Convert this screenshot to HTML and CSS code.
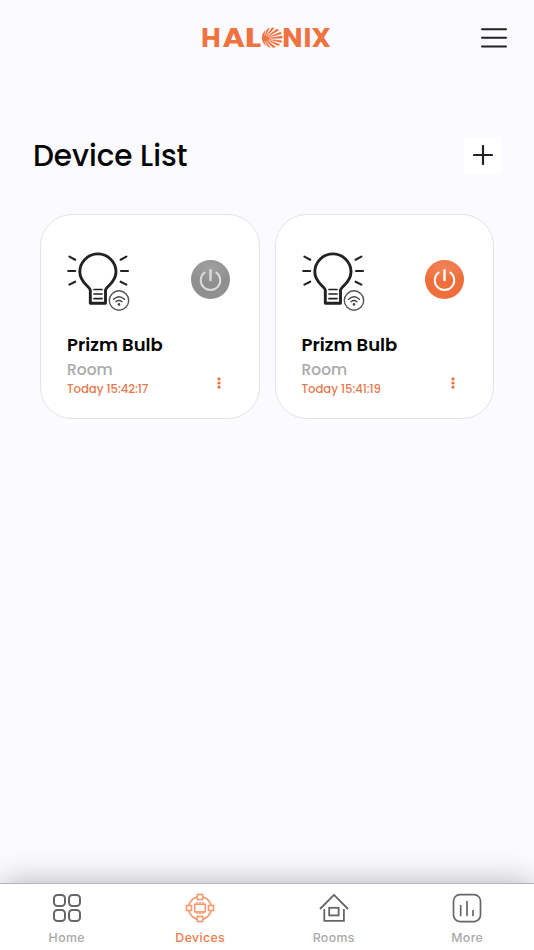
FILE: index.html
```html
<!DOCTYPE html>
<html lang="en">

<head>
    <meta charset="UTF-8">
    <meta name="viewport" content="width=device-width, initial-scale=1.0">
    <title>Halonix</title>
    <link rel="stylesheet" href="styles.css">
</head>

<body>
    <!-- icons used more than once -->
    <svg class="sprite" aria-hidden="true">
        <symbol id="bulb" viewBox="0 0 64 60">
            <g fill="none" stroke="#222" stroke-width="2.9">
                <path d="M23.3 51.2V38.5C23.3 34.5 12.8 31 12.8 20a18.1 18.1 0 0 1 36.2 0C49 31 38.5 34.5 38.5 38.5V51.2Z" stroke-linejoin="round" />
                <path d="M27 37.5h8M27 42h8M27 46.7h8" stroke-width="1.7" stroke-linecap="round" />
                <path d="M2.4 4.6l5.8 3.1M1.2 19h7M2.4 32.6l5.8-2.9M59.4 4.6l-5.8 3.1M61 19h-7M59.4 32.6l-5.8-2.9" stroke-width="2.1" stroke-linecap="round" />
            </g>
            <circle cx="52" cy="48.5" r="11" fill="#fff" />
            <circle cx="52" cy="48.5" r="9.7" fill="#fff" stroke="#555" stroke-width="1.4" />
            <path d="M46.6 47.2q5.4-4.8 10.8 0M49 49.8q3-2.6 6 0" fill="none" stroke="#444" stroke-width="1.3" stroke-linecap="round" />
            <circle cx="52" cy="52.4" r="1.3" fill="#444" />
        </symbol>
        <symbol id="power" viewBox="0 0 40 40">
            <path d="M14 12.8a10 10 0 1 0 12 0" fill="none" stroke="currentColor" stroke-width="2" stroke-linecap="round" />
            <path d="M20 10.5v10" stroke="currentColor" stroke-width="2.5" stroke-linecap="round" />
        </symbol>
        <symbol id="dots" viewBox="0 0 4 12">
            <circle cx="2" cy="1.9" r="1.6" />
            <circle cx="2" cy="6" r="1.6" />
            <circle cx="2" cy="10.1" r="1.6" />
        </symbol>
    </svg>

    <header class="header">
        <svg class="logo" viewBox="0 0 130 44" role="img" aria-label="Halonix">
            <text x="-1" y="31.2">H</text>
            <text x="20.4" y="31.2" textLength="22.4" lengthAdjust="spacingAndGlyphs">A</text>
            <text x="42.8" y="31.2" textLength="16.5" lengthAdjust="spacingAndGlyphs">L</text>
            <circle cx="70.2" cy="21.7" r="10.3" />
            <path class="rays" d="M64 20.2L68 11l2.4-.4ZM65 20.5L73.5 11l2 1ZM66 21L78 13.8l1.2 1.6ZM67 21.8L80.5 17.8l.3 1.8ZM67 22.9L81 22.6l-.2 1.8ZM66.5 23.8L79.8 27l-1 1.5ZM65.5 24.6L76.5 30.2l-1.8 1.3ZM64 25L71.5 32.5l-2.2.2ZM62.5 24.8L66 31.8l-1.6-.8ZM62.6 19.8L63.4 13.6l1.6-1.3Z" />
            <text x="80.3 101.6 109.6" y="31.2">NIX</text>
        </svg>
        <button class="menuBtn" aria-label="Menu">
            <svg width="28" height="22" viewBox="0 0 28 22">
                <path d="M2 2.3h24M2 10.8h24M2 19.4h24" stroke="#222" stroke-width="2" stroke-linecap="round" />
            </svg>
        </button>
    </header>

    <main class="main">
        <div class="titleRow">
            <h1 class="title">Device List</h1>
            <button class="addBtn" aria-label="Add device">
                <svg width="20" height="20" viewBox="0 0 20 20">
                    <path d="M10 1v18M1 10h18" stroke="#222" stroke-width="2.2" stroke-linecap="round" />
                </svg>
            </button>
        </div>

        <div class="deviceGrid">
            <div class="card">
                <div class="cardTop">
                    <svg class="bulb"><use href="#bulb" /></svg>
                    <button class="power" aria-label="Turn on"><svg><use href="#power" /></svg></button>
                </div>
                <h2 class="deviceName">Prizm Bulb</h2>
                <p class="room">Room</p>
                <p class="time">Today 15:42:17</p>
                <svg class="dots"><use href="#dots" /></svg>
            </div>
            <div class="card">
                <div class="cardTop">
                    <svg class="bulb"><use href="#bulb" /></svg>
                    <button class="power powerOn" aria-label="Turn off"><svg><use href="#power" /></svg></button>
                </div>
                <h2 class="deviceName">Prizm Bulb</h2>
                <p class="room">Room</p>
                <p class="time">Today 15:41:19</p>
                <svg class="dots"><use href="#dots" /></svg>
            </div>
        </div>
    </main>

    <nav class="navbar">
        <a class="navItem">
            <svg viewBox="0 0 30 30" stroke-width="2">
                <rect x="2" y="2" width="11" height="11" rx="3.5" />
                <rect x="17" y="2" width="11" height="11" rx="3.5" />
                <rect x="2" y="17" width="11" height="11" rx="3.5" />
                <rect x="17" y="17" width="11" height="11" rx="3.5" />
            </svg>
            <span>Home</span>
        </a>
        <a class="navItem active">
            <svg viewBox="0 0 30 30" stroke-width="1.6">
                <circle cx="15" cy="15" r="11.4" />
                <g fill="#fff">
                    <rect x="12.3" y="1.5" width="5.4" height="5" />
                    <rect x="12.3" y="23.5" width="5.4" height="5" />
                    <rect x="1.5" y="12.5" width="5" height="5" />
                    <rect x="23.5" y="12.5" width="5" height="5" />
                </g>
                <rect x="9.7" y="11.3" width="10.6" height="7.6" />
                <path d="M12 9v2M15 9v2M18 9v2M12 19v2M15 19v2M18 19v2" />
            </svg>
            <span>Devices</span>
        </a>
        <a class="navItem">
            <svg viewBox="0 0 30 30" stroke-width="1.8">
                <path d="M1.5 15.5L15 1.8L28.5 15.5" stroke-linecap="round" stroke-linejoin="round" />
                <path d="M5.3 16v11.9h19.6V16" />
                <rect x="10.2" y="14.8" width="9.4" height="7.6" />
            </svg>
            <span>Rooms</span>
        </a>
        <a class="navItem">
            <svg viewBox="0 0 30 30" stroke-width="1.7">
                <rect x="1.5" y="1.6" width="27" height="27" rx="6.5" />
                <path d="M8.7 12.5v10M15 8.5v14M21 17.5v5" stroke-linecap="round" />
            </svg>
            <span>More</span>
        </a>
    </nav>
</body>

</html>
```

FILE: styles.css
```css
* {
    margin: 0;
    padding: 0;
    box-sizing: border-box;
}

body {
    display: flex;
    flex-direction: column;
    height: 100vh;
    overflow: hidden;
    background-color: #fafaff;
    color: #050505;
    font-family: "Poppins", "Inter", sans-serif;
    font-feature-settings: "cv11";
}

button {
    border: none;
    background: transparent;
    cursor: pointer;
}

svg {
    display: block;
}

.sprite {
    width: 0;
    height: 0;
    flex: none;
}

.header {
    display: grid;
    grid-template-columns: 1fr 130px 1fr;
    align-items: center;
    height: 76px;
    padding: 0 26px;
}

.logo {
    grid-column: 2;
    width: 130px;
    height: 44px;
    overflow: visible;
    fill: #f0723f;
    font-size: 27px;
    font-weight: 700;
}

.rays {
    fill: #fafaff;
    stroke: #fafaff;
    stroke-width: 0.2;
}

.menuBtn {
    justify-self: end;
}

.main {
    flex: 1;
    padding: 61px 32px 0;
}

.titleRow {
    display: flex;
    justify-content: space-between;
    align-items: center;
    height: 37px;
    padding: 0 1px;
}

.title {
    font-size: 29.5px;
    font-weight: 500;
    letter-spacing: -0.05px;
}

.addBtn {
    display: flex;
    justify-content: center;
    align-items: center;
    width: 37px;
    height: 37px;
    background-color: white;
}

.addBtn svg {
    margin-bottom: 1px;
}

.deviceGrid {
    display: grid;
    grid-template-columns: 1fr 1fr;
    gap: 15px;
    padding: 40px 8px 0;
}

.card {
    position: relative;
    height: 205px;
    padding: 37px 29px 0 26px;
    background-color: white;
    border: 1px solid #e4e4e6;
    border-radius: 32px;
}

.cardTop {
    display: flex;
    justify-content: space-between;
    height: 60px;
}

.bulb {
    width: 64px;
    height: 60px;
}

.power {
    width: 39px;
    height: 39px;
    margin-top: 8px;
    border-radius: 50%;
    background: radial-gradient(ellipse 65% 36% at 50% 20%, #a0a0a0, #8f8f8f);
    color: #dcdcdc;
}

.power svg {
    width: 39px;
    height: 39px;
}

.powerOn {
    background: radial-gradient(ellipse 65% 36% at 50% 20%, #f28457, #ee6f3c);
    color: white;
}

.deviceName {
    margin-top: 20px;
    font-size: 18px;
    line-height: 26px;
    font-weight: 600;
}

.room {
    font-size: 15.5px;
    line-height: 23px;
    font-weight: 500;
    color: #aaa;
}

.time {
    font-size: 11.7px;
    line-height: 16px;
    font-weight: 500;
    letter-spacing: -0.05px;
    color: #e57a50;
}

.dots {
    position: absolute;
    right: 38px;
    bottom: 29px;
    width: 4px;
    height: 12px;
    fill: #ee6f3c;
}

.navbar {
    display: grid;
    grid-template-columns: repeat(4, 1fr);
    height: 67px;
    padding-top: 9px;
    background-color: white;
    border-top: 1px solid #b5b5b7;
    box-shadow: 0 -3px 30px -2px rgba(0, 0, 0, 0.28);
}

.navItem {
    display: flex;
    flex-direction: column;
    align-items: center;
    color: #a9a9a9;
    font-family: "Inter", sans-serif;
    font-feature-settings: normal;
    font-size: 12.3px;
    line-height: 16px;
    font-weight: 500;
    letter-spacing: 0.4px;
}

.navItem svg {
    width: 30px;
    height: 30px;
    margin-bottom: 7px;
    fill: none;
    stroke: #666;
}

.active {
    color: #f07a4b;
}

.active svg {
    stroke: #f39a74;
}
```
